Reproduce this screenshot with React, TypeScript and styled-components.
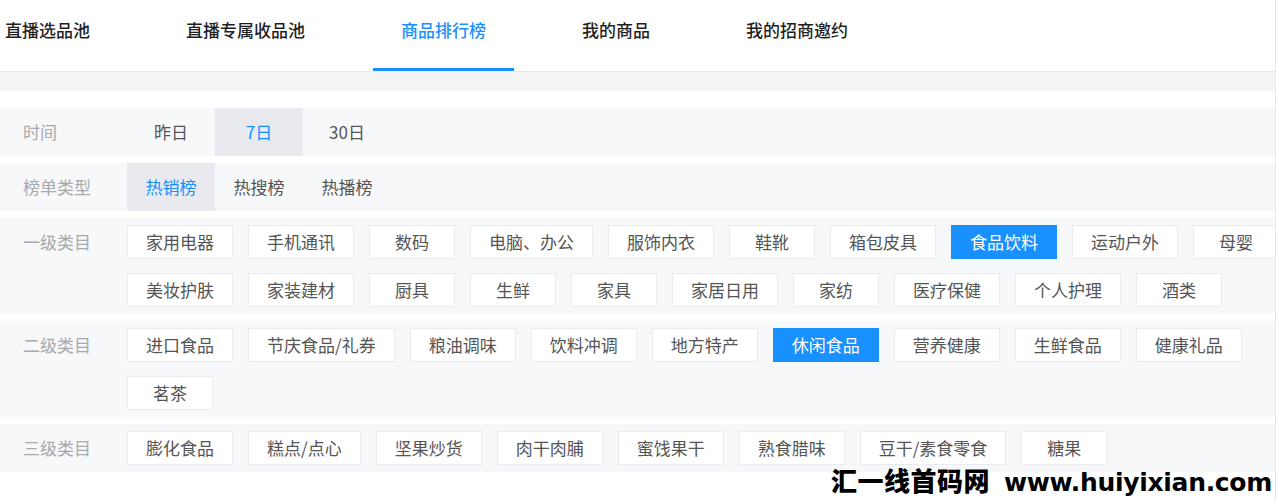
import React, { useState } from 'react';
import styled, { createGlobalStyle } from 'styled-components';

const FONT = '"Noto Sans CJK SC", "Liberation Sans", sans-serif';
const BLUE = '#1890ff';

const GlobalStyle = createGlobalStyle`
  html, body {
    margin: 0;
    padding: 0;
    background: #fff;
    overflow: hidden;
  }
  body {
    font-family: ${FONT};
  }
`;

const Page = styled.div`
  position: relative;
  width: 1276px;
  height: 501px;
  box-sizing: border-box;
  border-right: 1px solid #e6e7ea;
  overflow: hidden;
  background: #fff;
`;

const TabBar = styled.nav`
  display: flex;
  height: 71px;
  padding-left: 5px;
  background: #fff;
`;

const Tab = styled.div<{ $active?: boolean }>`
  position: relative;
  padding: 18px 28px 0;
  margin-right: 40px;
  font-size: 17px;
  line-height: 24px;
  font-weight: 500;
  white-space: nowrap;
  color: ${(p) => (p.$active ? BLUE : '#1f1f1f')};
  cursor: pointer;

  &:first-child {
    padding-left: 0;
  }

  &::after {
    content: '';
    display: ${(p) => (p.$active ? 'block' : 'none')};
    position: absolute;
    left: 0;
    right: 0;
    bottom: 0;
    height: 3px;
    background: ${BLUE};
  }
`;

const Band = styled.div`
  height: 19px;
  border-top: 1px solid #e8e8ea;
  background: #f4f4f5;
  margin-bottom: 17px;
`;

const Filters = styled.div`
  display: flex;
  flex-direction: column;
  gap: 7px;
`;

const Row = styled.div<{ $tags?: boolean }>`
  display: flex;
  align-items: ${(p) => (p.$tags ? 'flex-start' : 'stretch')};
  min-height: ${(p) => (p.$tags ? 'auto' : '48px')};
  padding: ${(p) => (p.$tags ? '7px 0' : '0')};
  background: #f7f8fa;
`;

const Label = styled.div<{ $tags?: boolean }>`
  flex: 0 0 104px;
  padding-left: 23px;
  font-size: 17px;
  line-height: ${(p) => (p.$tags ? '34px' : '48px')};
  color: #a7a9ad;
  white-space: nowrap;
`;

const Options = styled.div`
  display: flex;
`;

const Option = styled.div<{ $active?: boolean }>`
  width: 88px;
  font-size: 17px;
  line-height: 48px;
  text-align: center;
  color: ${(p) => (p.$active ? BLUE : '#555')};
  background: ${(p) => (p.$active ? '#e9eaef' : 'transparent')};
  cursor: pointer;
`;

const TagList = styled.div`
  display: flex;
  flex-wrap: wrap;
  gap: 14px 15px;
  width: 1200px;
  flex-shrink: 0;
`;

const Tag = styled.div<{ $active?: boolean }>`
  box-sizing: border-box;
  min-width: 86px;
  height: 34px;
  padding: 0 18px;
  font-size: 17px;
  line-height: 32px;
  text-align: center;
  white-space: nowrap;
  color: ${(p) => (p.$active ? '#fff' : '#555')};
  background: ${(p) => (p.$active ? BLUE : '#fff')};
  border: 1px solid ${(p) => (p.$active ? BLUE : '#e9ebef')};
  cursor: pointer;
`;

const Watermark = styled.div`
  position: absolute;
  right: 3px;
  bottom: 3px;
  display: flex;
  align-items: baseline;
  gap: 14px;
  color: #000;
  font-weight: 900;
  line-height: 30px;
  white-space: nowrap;
  pointer-events: none;
`;

const MarkName = styled.span`
  font-family: "Noto Sans CJK SC", sans-serif;
  font-size: 26px;
  letter-spacing: 0.5px;
`;

const MarkUrl = styled.span`
  font-family: "DejaVu Sans", "Liberation Sans", sans-serif;
  font-weight: 700;
  font-size: 25px;
  letter-spacing: -0.3px;
`;

const tabs = ['直播选品池', '直播专属收品池', '商品排行榜', '我的商品', '我的招商邀约'];
const periods = ['昨日', '7日', '30日'];
const boards = ['热销榜', '热搜榜', '热播榜'];

const level1 = [
  '家用电器', '手机通讯', '数码', '电脑、办公', '服饰内衣', '鞋靴', '箱包皮具', '食品饮料', '运动户外', '母婴',
  '美妆护肤', '家装建材', '厨具', '生鲜', '家具', '家居日用', '家纺', '医疗保健', '个人护理', '酒类',
];
const level2 = [
  '进口食品', '节庆食品/礼券', '粮油调味', '饮料冲调', '地方特产', '休闲食品', '营养健康', '生鲜食品', '健康礼品', '茗茶',
];
const level3 = ['膨化食品', '糕点/点心', '坚果炒货', '肉干肉脯', '蜜饯果干', '熟食腊味', '豆干/素食零食', '糖果'];

function TagRow({ label, items, value, onPick }: {
  label: string;
  items: string[];
  value: string;
  onPick: (v: string) => void;
}) {
  return (
    <Row $tags>
      <Label $tags>{label}</Label>
      <TagList>
        {items.map((t) => (
          <Tag key={t} $active={t === value} onClick={() => onPick(t)}>{t}</Tag>
        ))}
      </TagList>
    </Row>
  );
}

export default function App() {
  const [tab, setTab] = useState('商品排行榜');
  const [period, setPeriod] = useState('7日');
  const [board, setBoard] = useState('热销榜');
  const [cat1, setCat1] = useState('食品饮料');
  const [cat2, setCat2] = useState('休闲食品');
  const [cat3, setCat3] = useState('');

  return (
    <Page>
      <GlobalStyle />
      <TabBar>
        {tabs.map((t) => (
          <Tab key={t} $active={t === tab} onClick={() => setTab(t)}>{t}</Tab>
        ))}
      </TabBar>
      <Band />

      <Filters>
        <Row>
          <Label>时间</Label>
          <Options>
            {periods.map((p) => (
              <Option key={p} $active={p === period} onClick={() => setPeriod(p)}>{p}</Option>
            ))}
          </Options>
        </Row>
        <Row>
          <Label>榜单类型</Label>
          <Options>
            {boards.map((b) => (
              <Option key={b} $active={b === board} onClick={() => setBoard(b)}>{b}</Option>
            ))}
          </Options>
        </Row>
        <TagRow label="一级类目" items={level1} value={cat1} onPick={setCat1} />
        <TagRow label="二级类目" items={level2} value={cat2} onPick={setCat2} />
        <TagRow label="三级类目" items={level3} value={cat3} onPick={setCat3} />
      </Filters>

      <Watermark>
        <MarkName>汇一线首码网</MarkName>
        <MarkUrl>www.huiyixian.com</MarkUrl>
      </Watermark>
    </Page>
  );
}
